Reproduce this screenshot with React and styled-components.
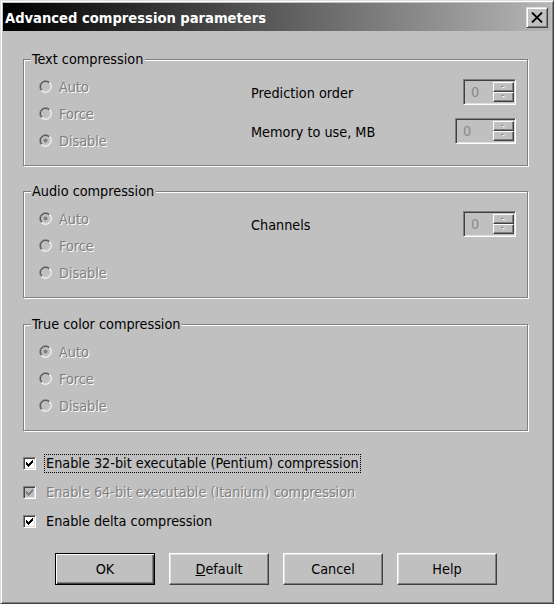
import React from 'react';
import styled, { createGlobalStyle } from 'styled-components';

const GlobalStyle = createGlobalStyle`
  html, body {
    margin: 0;
    padding: 0;
    background: #c0c0c0;
  }
  body {
    font-family: "DejaVu Sans Condensed", "Liberation Sans", sans-serif;
    font-size: 14.3px;
    color: #000;
  }
`;

const Window = styled.div`
  width: 554px;
  height: 604px;
  box-sizing: border-box;
  background: #c0c0c0;
  border: 1px solid;
  border-color: #dfdfdf #404040 #404040 #dfdfdf;
  box-shadow: inset 1px 1px #fff, inset -1px -1px #808080;
  padding: 2px;
  display: flex;
  flex-direction: column;
`;

const TitleBar = styled.div`
  height: 28px;
  flex: none;
  display: flex;
  align-items: center;
  justify-content: space-between;
  padding: 0 3px 0 2px;
  background: linear-gradient(to right, #000 0%, #b6b6b6 100%);
  color: #fff;
  font-weight: bold;
  font-size: 14.6px;
`;

const CloseButton = styled.div`
  width: 22px;
  height: 21px;
  box-sizing: border-box;
  background: #c0c0c0;
  border: 1px solid;
  border-color: #dfdfdf #404040 #404040 #dfdfdf;
  box-shadow: inset 1px 1px #fff, inset -1px -1px #808080;
  display: flex;
  align-items: center;
  justify-content: center;
`;

const Content = styled.div`
  display: flex;
  flex-direction: column;
  padding-left: 20px;
`;

const GroupBox = styled.div`
  width: 505px;
  height: 107px;
  box-sizing: border-box;
  margin-top: ${(p) => p.$top}px;
  border: 1px solid #808080;
  box-shadow: inset 1px 1px #fff, 1px 1px #fff;
  display: flex;
  flex-direction: column;
`;

const GroupTitle = styled.div`
  align-self: flex-start;
  margin: -10px 0 0 7px;
  padding: 0 2px 0 1px;
  line-height: 18px;
  background: #c0c0c0;
`;

const GroupBody = styled.div`
  display: grid;
  grid-template-columns: 212px 1fr;
  padding: 0 11px 0 15px;
`;

const RadioColumn = styled.div`
  display: flex;
  flex-direction: column;
  padding-top: 5px;
`;

const RadioRow = styled.div`
  height: 27px;
  display: flex;
  align-items: center;
  gap: 7px;
`;

const DisabledText = styled.span`
  color: #808080;
  text-shadow: 1px 1px 0 #fff;
`;

const FieldColumn = styled.div`
  display: flex;
  flex-direction: column;
  gap: 13px;
  padding-top: 11px;
`;

const FieldRow = styled.div`
  height: 26px;
  display: flex;
  align-items: center;
  justify-content: space-between;
`;

const FieldLabel = styled.span`
  padding-top: 2px;
`;

const SpinEdit = styled.div`
  width: ${(p) => p.$width}px;
  height: 26px;
  box-sizing: border-box;
  border: 1px solid;
  border-color: #808080 #fff #fff #808080;
  box-shadow: inset 1px 1px #404040, inset -1px -1px #dfdfdf;
  background: #c0c0c0;
  padding: 1px;
  display: flex;
  align-items: stretch;
`;

const SpinValue = styled.div`
  flex: 1;
  display: flex;
  align-items: center;
  padding-left: 6px;
  color: #8a8a8a;
`;

const SpinButtons = styled.div`
  width: 21px;
  display: flex;
  flex-direction: column;
  padding: 1px 0;
`;

const SpinButton = styled.div`
  flex: 1;
  box-sizing: border-box;
  border: 1px solid;
  border-color: #fff #404040 #404040 #fff;
  box-shadow: inset -1px -1px #808080;
  display: flex;
  align-items: center;
  justify-content: center;
`;

const CheckList = styled.div`
  display: flex;
  flex-direction: column;
  margin-top: 18px;
`;

const CheckRow = styled.div`
  height: 29px;
  display: flex;
  align-items: center;
  gap: 9px;
`;

const CheckBox = styled.div`
  width: 13px;
  height: 13px;
  box-sizing: border-box;
  border: 1px solid;
  border-color: #808080 #fff #fff #808080;
  box-shadow: inset 1px 1px #404040, inset -1px -1px #dfdfdf;
  background: ${(p) => (p.$disabled ? '#c0c0c0' : '#fff')};
  display: flex;
  align-items: center;
  justify-content: center;
`;

const CheckLabel = styled.span`
  padding: 0 1px;
  line-height: 17px;
  outline: ${(p) => (p.$focused ? '1px dotted #000' : 'none')};
  color: ${(p) => (p.$disabled ? '#808080' : '#000')};
  text-shadow: ${(p) => (p.$disabled ? '1px 1px 0 #fff' : 'none')};
`;

const ButtonRow = styled.div`
  display: flex;
  gap: 14px;
  margin-top: 17px;
  padding-left: 32px;
`;

const Button = styled.div`
  width: 100px;
  height: 32px;
  box-sizing: border-box;
  background: #c0c0c0;
  border: 1px solid;
  border-color: ${(p) => (p.$default ? '#000' : '#fff #404040 #404040 #fff')};
  box-shadow: ${(p) =>
    p.$default
      ? 'inset 1px 1px #fff, inset -1px -1px #404040, inset -2px -2px #808080'
      : 'inset -1px -1px #808080, inset 1px 1px #dfdfdf'};
  display: flex;
  align-items: center;
  justify-content: center;
`;

const Mnemonic = styled.span`
  text-decoration: underline;
`;

const RadioIcon = ({ checked }) => (
  <svg width="13" height="13" viewBox="0 0 13 13">
    <circle cx="6.5" cy="6.5" r="5" fill="#c0c0c0" />
    <path d="M2.26 10.74 A6 6 0 0 1 10.74 2.26" stroke="#808080" fill="none" />
    <path d="M10.74 2.26 A6 6 0 0 1 2.26 10.74" stroke="#fff" fill="none" />
    <path d="M2.96 10.04 A5 5 0 0 1 10.04 2.96" stroke="#404040" fill="none" />
    <path d="M10.04 2.96 A5 5 0 0 1 2.96 10.04" stroke="#dfdfdf" fill="none" />
    {checked && <circle cx="6.5" cy="6.5" r="2" fill="#808080" />}
  </svg>
);

const checkCols = [2, 3, 4, 3, 2, 1, 0];

const CheckMark = ({ color }) => (
  <svg width="7" height="7" viewBox="0 0 7 7">
    {checkCols.map((y, x) => (
      <rect key={x} x={x} y={y} width="1" height="3" fill={color} />
    ))}
  </svg>
);

const Arrow = ({ up }) => (
  <svg width="5" height="4" viewBox="0 0 5 4">
    <path d={up ? 'M1 3 L4 3 L2.5 1.5 Z' : 'M1 1 L4 1 L2.5 2.5 Z'} fill="#fff" />
    <path d={up ? 'M0 2 L3 2 L1.5 0.5 Z' : 'M0 0 L3 0 L1.5 1.5 Z'} fill="#808080" />
  </svg>
);

const CloseIcon = () => (
  <svg width="12" height="11" viewBox="0 0 12 11">
    <path d="M1 0.5 L11 10.5 M11 0.5 L1 10.5" stroke="#000" strokeWidth="1.8" />
  </svg>
);

const Spin = ({ width }) => (
  <SpinEdit $width={width}>
    <SpinValue>0</SpinValue>
    <SpinButtons>
      <SpinButton><Arrow up /></SpinButton>
      <SpinButton><Arrow /></SpinButton>
    </SpinButtons>
  </SpinEdit>
);

const modes = ['Auto', 'Force', 'Disable'];

const Group = ({ title, top, selected, fields }) => (
  <GroupBox $top={top}>
    <GroupTitle>{title}</GroupTitle>
    <GroupBody>
      <RadioColumn>
        {modes.map((m) => (
          <RadioRow key={m}>
            <RadioIcon checked={m === selected} />
            <DisabledText>{m}</DisabledText>
          </RadioRow>
        ))}
      </RadioColumn>
      <FieldColumn>
        {fields.map((f) => (
          <FieldRow key={f.label}>
            <FieldLabel>{f.label}</FieldLabel>
            <Spin width={f.width} />
          </FieldRow>
        ))}
      </FieldColumn>
    </GroupBody>
  </GroupBox>
);

const groups = [
  {
    title: 'Text compression',
    top: 28,
    selected: 'Disable',
    fields: [
      { label: 'Prediction order', width: 53 },
      { label: 'Memory to use, MB', width: 61 },
    ],
  },
  {
    title: 'Audio compression',
    top: 25,
    selected: 'Auto',
    fields: [{ label: 'Channels', width: 53 }],
  },
  { title: 'True color compression', top: 26, selected: 'Auto', fields: [] },
];

const options = [
  { label: 'Enable 32-bit executable (Pentium) compression', focused: true },
  { label: 'Enable 64-bit executable (Itanium) compression', disabled: true },
  { label: 'Enable delta compression' },
];

const App = () => (
  <>
    <GlobalStyle />
    <Window>
      <TitleBar>
        <span>Advanced compression parameters</span>
        <CloseButton><CloseIcon /></CloseButton>
      </TitleBar>
      <Content>
        {groups.map((g) => (
          <Group key={g.title} {...g} />
        ))}
        <CheckList>
          {options.map((o) => (
            <CheckRow key={o.label}>
              <CheckBox $disabled={o.disabled}>
                <CheckMark color={o.disabled ? '#808080' : '#000'} />
              </CheckBox>
              <CheckLabel $focused={o.focused} $disabled={o.disabled}>{o.label}</CheckLabel>
            </CheckRow>
          ))}
        </CheckList>
        <ButtonRow>
          <Button $default>OK</Button>
          <Button><span><Mnemonic>D</Mnemonic>efault</span></Button>
          <Button>Cancel</Button>
          <Button>Help</Button>
        </ButtonRow>
      </Content>
    </Window>
  </>
);

export default App;
